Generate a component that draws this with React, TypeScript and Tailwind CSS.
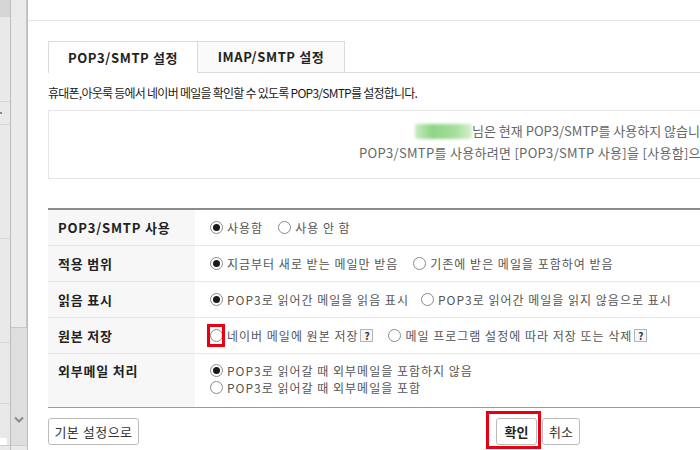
import type { ReactNode } from 'react';

function Radio({ checked = false }: { checked?: boolean }) {
  return (
    <span className="w-[13px] h-[13px] rounded-full border border-[#8a8a8a] bg-white flex items-center justify-center shrink-0">
      {checked && <span className="w-[7px] h-[7px] rounded-full bg-[#1b1b1b]" />}
    </span>
  );
}

function Help() {
  return (
    <span className="ml-[2px] w-[13px] h-[13px] border border-[#b4b4b4] bg-[#f6f6f6] flex items-center justify-center text-[10px] leading-none font-bold text-[#333] tracking-normal shrink-0">
      ?
    </span>
  );
}

function Option({ checked, children, className = '' }: { checked?: boolean; children: ReactNode; className?: string }) {
  return (
    <label className={`flex items-center gap-[4px] whitespace-nowrap ${className}`}>
      <Radio checked={checked} />
      <span>{children}</span>
    </label>
  );
}

function Row({ label, h, children, last }: { label: string; h: string; children: ReactNode; last?: boolean }) {
  return (
    <div className={`flex ${h} border-b ${last ? 'border-[#9a9a9a]' : 'border-[#e6e6e6]'}`}>
      <div
        className={`w-[147px] shrink-0 bg-[#f7f7f7] pl-[10px] flex text-[13px] font-bold text-[#222] tracking-[0.8px] ${
          last ? 'items-start pt-[8px] leading-[17px]' : 'items-center'
        }`}
      >
        {label}
      </div>
      <div
        className={`flex-1 pl-[15px] flex text-[12px] text-[#555] tracking-[1px] ${
          last ? 'items-start pt-[8px]' : 'items-center'
        }`}
      >
        {children}
      </div>
    </div>
  );
}

export default function App() {
  return (
    <div className="w-[700px] h-[450px] flex overflow-hidden bg-white font-['Noto_Sans_CJK_KR','Noto_Sans',sans-serif]">
      {/* left side panel edge */}
      <div className="w-[10px] shrink-0 bg-[#e9e9e9] flex flex-col">
        <div className="h-[17px] bg-[#d5d5d5]" />
        <div className="h-[84px]" />
        <div className="h-[24px] border-y border-[#d6d6d6] relative">
          <span className="absolute left-0 top-[10px] w-[2px] h-[2px] bg-[#888]" />
        </div>
        <div className="h-[114px] border-b border-[#d6d6d6]" />
        <div className="h-[104px] border-b border-[#d6d6d6]" />
        <div className="h-[61px] border-b border-[#d6d6d6]" />
        <div className="flex-1" />
        <div className="h-[7px] w-[7px] bg-white rounded-tr-[2px]" />
        <div className="h-[5px] border-t border-[#cfcfcf]" />
      </div>
      {/* scrollbar */}
      <div className="w-[18px] shrink-0 border-l border-r border-[#bdbdbd] bg-[#dedede] flex flex-col">
        <div className="h-[328px] bg-[#ebebeb] border-r border-b border-[#c6c6c6]" />
        <div className="flex-1 flex items-end justify-center pb-[22px]">
          <svg width="10" height="7" viewBox="0 0 10 7">
            <path d="M1 1.5 L5 5.5 L9 1.5" fill="none" stroke="#8a8a8a" strokeWidth="2" />
          </svg>
        </div>
        <div className="h-[5px] border-t border-[#cfcfcf] bg-[#e9e9e9]" />
      </div>

      {/* main */}
      <div className="flex-1 overflow-hidden">
        <div className="h-[21px] border-b border-[#e5e5e5] w-[1000px]" />
        <div className="pl-[20px] w-[1000px]">
          <div className="mt-[20px] flex border-b border-[#dcdcdc] h-[32px]">
            <div className="w-[150px] h-[32px] -mb-px border-l border-t border-r border-[#dcdcdc] bg-white flex items-center justify-center text-[13px] font-bold text-[#222] tracking-[0.6px]">
              POP3/SMTP 설정
            </div>
            <div className="w-[147px] h-[31px] border-t border-r border-[#dcdcdc] bg-[#fafafa] flex items-center justify-center text-[13px] font-bold text-[#222] tracking-[0.6px]">
              IMAP/SMTP 설정
            </div>
          </div>

          <p className="mt-[13px] h-[14px] leading-[14px] text-[12px] tracking-[-0.75px] text-[#1a1a1a] whitespace-nowrap">
            휴대폰,아웃룩 등에서 네이버 메일을 확인할 수 있도록 POP3/SMTP를 설정합니다.
          </p>

          <div className="mt-[10px] h-[69px] border border-[#e5e5e5] pt-[9px] text-[13px] leading-[22px] text-[#666] whitespace-nowrap">
            <div className="flex items-center pl-[366px]">
              <span className="inline-block w-[57px] h-[15px] rounded-[3px] bg-[linear-gradient(90deg,#c9ecc0,#8fd485_30%,#a6dd9b_70%,#d5f0cf)] blur-[1.5px]" />
              <span>님은 현재 POP3/SMTP를 사용하지 않습니다.</span>
            </div>
            <div className="flex items-center pl-[310px]">
              <span className="tracking-[0.3px]">POP3/SMTP를 사용하려면 [POP3/SMTP 사용]을 [사용함]으로 설정하세요.</span>
            </div>
          </div>

          <div className="mt-[29px] border-t-2 border-[#8c8c8c]">
            <Row label="POP3/SMTP 사용" h="h-[36px]">
              <Option checked>사용함</Option>
              <Option className="ml-[15px]">사용 안 함</Option>
            </Row>
            <Row label="적용 범위" h="h-[36px]">
              <Option checked>지금부터 새로 받는 메일만 받음</Option>
              <Option className="ml-[15px]">기존에 받은 메일을 포함하여 받음</Option>
            </Row>
            <Row label="읽음 표시" h="h-[36px]">
              <Option checked>POP3로 읽어간 메일을 읽음 표시</Option>
              <Option className="ml-[12px]">POP3로 읽어간 메일을 읽지 않음으로 표시</Option>
            </Row>
            <Row label="원본 저장" h="h-[36px]">
              <span className="relative flex items-center">
                <Radio />
                <span className="absolute left-[-3px] top-[-5px] w-[18px] h-[23px] border-[3px] border-[#e60012]" />
              </span>
              <span className="ml-[4px] whitespace-nowrap">네이버 메일에 원본 저장</span>
              <Help />
              <Option className="ml-[15px]">메일 프로그램 설정에 따라 저장 또는 삭제</Option>
              <Help />
            </Row>
            <Row label="외부메일 처리" h="h-[54px]" last>
              <div className="flex flex-col leading-[17px]">
                <Option checked>POP3로 읽어갈 때 외부메일을 포함하지 않음</Option>
                <Option>POP3로 읽어갈 때 외부메일을 포함</Option>
              </div>
            </Row>
          </div>

          <div className="mt-[10px] w-[980px] grid grid-cols-[1fr_auto_1fr] items-center">
            <div>
              <button className="h-[27px] w-[91px] border border-[#bcbcbc] rounded-[3px] bg-white text-[13px] text-[#333] tracking-[0.5px]">
                기본 설정으로
              </button>
            </div>
            <div className="flex gap-[5px]">
              <span className="relative">
                <button className="h-[27px] w-[41px] border border-[#bcbcbc] rounded-[3px] bg-white text-[13px] font-bold text-[#222]">
                  확인
                </button>
                <span className="absolute left-[-10px] top-[-7px] right-[-4px] bottom-[-4px] border-[3px] border-[#e60012]" />
              </span>
              <button className="h-[27px] w-[38px] border border-[#bcbcbc] rounded-[3px] bg-white text-[13px] text-[#333]">
                취소
              </button>
            </div>
            <div />
          </div>
        </div>
      </div>
    </div>
  );
}
